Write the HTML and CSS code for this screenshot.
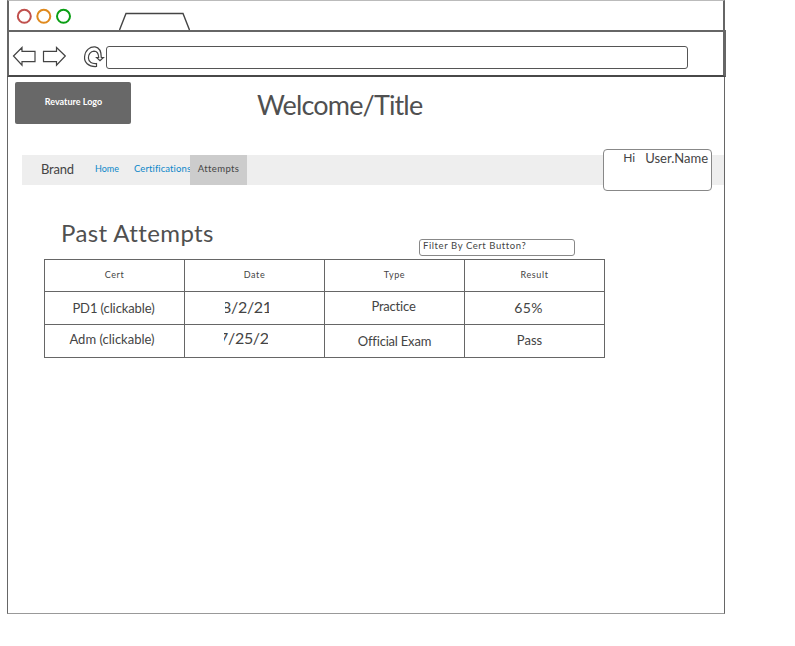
FILE: index.html
```html
<!DOCTYPE html>
<html lang="en">
<head>
<meta charset="utf-8">
<title>Past Attempts</title>
<link rel="stylesheet" href="styles.css">
</head>
<body>
<div class="window">
  <div class="tabs">
    <svg width="718" height="30" viewBox="7 0 718 30" fill="none" stroke-width="2">
      <circle cx="24.3" cy="16.3" r="6.5" stroke="#c0504d"/>
      <circle cx="43.8" cy="16.3" r="6.5" stroke="#e08a1e"/>
      <circle cx="63.5" cy="16.3" r="6.5" stroke="#0a9f14"/>
      <path d="M119.5 30L126 13.5H183L189.5 30" stroke="#444" stroke-width="1.4"/>
    </svg>
  </div>
  <div class="toolbar">
    <svg class="tools" width="96" height="30" viewBox="10 42 96 30" fill="none" stroke="#444" stroke-width="1.2">
      <path d="M13.5 56L22 47.5V51.3H35V61.7H22V65.2ZM65.3 56L56.5 47.5V51.3H43.5V61.7H56.5V65.2Z"/>
      <path d="M96.5 66.5C88 67 84 62 84.6 56.5C85.3 50 90 46.5 95 46.9C99.5 47.5 101.3 51.5 101.3 57.5H103.4L100 60.7L96.6 57.5H98.7C98.5 53.5 96.5 51.2 94 51.2C90.5 51.3 88.2 54.5 88.4 58C88.7 62.5 92 63.8 96.5 63.5Z"/>
    </svg>
    <div class="address"></div>
  </div>
  <main class="page">
    <header class="header">
      <div class="logo"><span>Revature Logo</span></div>
      <h1>Welcome/Title</h1>
    </header>
    <nav class="nav">
      <span class="brand">Brand</span>
      <a class="home">Home</a>
      <a class="certs">Certifications</a>
      <a class="active">Attempts</a>
      <div class="user"><span class="hi">Hi</span><span>User.Name</span></div>
    </nav>
    <section class="heading">
      <h2>Past Attempts</h2>
      <div class="filter">Filter By Cert Button?</div>
    </section>
    <div class="table">
      <div class="th">Cert</div><div class="th">Date</div><div class="th">Type</div><div class="th">Result</div>
      <div class="link">PD1 (clickable)</div><div><span class="date first">8/2/21</span></div><div class="practice">Practice</div><div class="score">65%</div>
      <div class="link adm">Adm (clickable)</div><div><span class="date second">7/25/21</span></div><div class="exam">Official Exam</div><div class="pass">Pass</div>
    </div>
  </main>
</div>
</body>
</html>
```
FILE: styles.css
```css
* { box-sizing: border-box; }
body { margin: 0; background: #fff; color: #444; font-family: Lato, sans-serif; font-variant-ligatures: none; }
.window { width: 718px; height: 614px; margin-left: 7px; display: flex; flex-direction: column; }
.tabs { height: 30px; border: solid #666; border-width: 1px 2px 0; border-top-color: #bbb; }
.tabs svg { display: block; margin: -1px 0 0 -2px; }
.toolbar { height: 47px; margin-right: -1px; border: 3px solid #666; border-width: 2px 3px 2px 2px; border-bottom-color: #484848; display: flex; }
.tools { margin: 10px 0 0 1px; flex: none; }
.address { width: 582px; height: 23px; margin-top: 14px; border: 1px solid #555; border-radius: 3px; }
.page { flex: 1; border: 1px solid #666; border-top: 0; border-bottom-color: #999; }
.header { display: flex; height: 78px; padding: 5px 0 0 7px; }
.logo { width: 116px; height: 42px; background: #686868; border-radius: 2px; color: #fff; text-align: center; font: 700 9px/40px Lato, sans-serif; }
.logo span { margin-left: 1px; }
h1 { margin: 2px 0 0 126px; font: 400 27px/42px Lato, sans-serif; letter-spacing: -.85px; color: #505050; white-space: nowrap; }
.nav { display: flex; margin-left: 14px; height: 30px; background: #eee; line-height: 28px; font-size: 9.5px; color: #0b87c9; }
.brand { width: 73px; padding-left: 19px; color: #444; font-size: 13px; letter-spacing: -.2px; }
.home { width: 39px; font-size: 9px; }
.certs { width: 56px; overflow: hidden; white-space: nowrap; letter-spacing: .1px; }
.active { width: 57px; background: #ccc; color: #444; text-align: center; letter-spacing: .4px; }
.user { display: flex; justify-content: flex-end; width: 109px; height: 42px; margin: -6px 0 0 356px; padding-right: 3px; border: 1px solid #888; border-radius: 4px; background: #fff; color: #444; font-size: 13px; line-height: 16px; }
.hi { margin-right: 10px; font-size: 12px; line-height: 15px; }
.heading { display: flex; height: 74px; padding-left: 53px; }
h2 { width: 358px; margin: 32px 0 0; font: 400 24px/32px Lato, sans-serif; letter-spacing: .4px; color: #505050; }
.filter { width: 156px; height: 17px; margin-top: 54px; padding-left: 3px; border: 1px solid #888; border-radius: 3px; font-size: 9.5px; line-height: 12px; letter-spacing: .58px; white-space: nowrap; }
.table { display: grid; grid-template: 32px 33px 33px / repeat(4, 140px); width: 561px; margin-left: 36px; border: solid #666; border-width: 1px 0 0 1px; }
.table > div { border: solid #666; border-width: 0 1px 1px 0; text-align: center; font-size: 13px; line-height: 32px; white-space: nowrap; }
.table > .th { font-size: 9px; line-height: 30px; letter-spacing: .6px; }
.table > .link { padding-right: 2px; letter-spacing: -.1px; }
.table > .link.adm { padding-right: 5px; letter-spacing: 0; }
.date { display: inline-block; width: 44px; height: 31px; margin-right: 15px; overflow: hidden; vertical-align: top; text-align: left; font-size: 16px; line-height: 29px; letter-spacing: -.3px; text-indent: -3px; }
.date.second { width: 44px; margin-right: 17px; line-height: 26px; text-indent: -5px; }
.table > .adm { line-height: 28px; }
.table > .practice { line-height: 29px; padding-right: 2px; letter-spacing: -.2px; }
.table > .score { padding-right: 12px; font-size: 14px; letter-spacing: .3px; }
.table > .exam { letter-spacing: -.2px; }
.table > .pass { padding-right: 10px; line-height: 30px; }
```
